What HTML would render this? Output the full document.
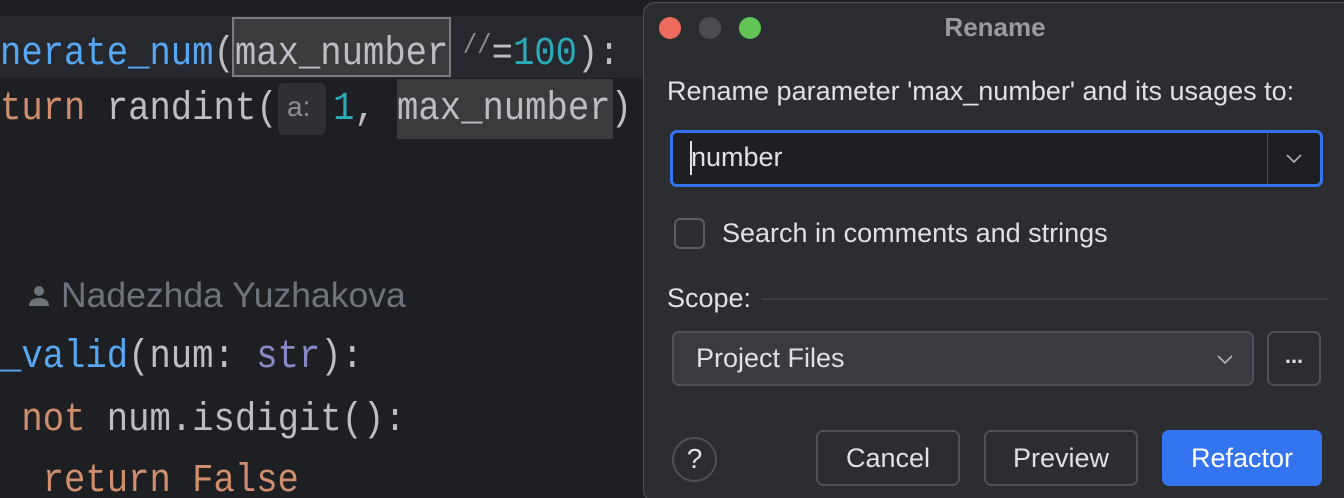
<!DOCTYPE html>
<html><head><meta charset="utf-8"><style>
*{margin:0;padding:0;box-sizing:border-box}
html,body{width:1344px;height:498px;overflow:hidden}
body{background:#1e1f22;position:relative;font-family:"Liberation Sans",sans-serif}
.code{position:absolute;left:0;font-family:"Liberation Mono",monospace;font-size:35.6px;color:#bcbec4;white-space:pre;line-height:62px;height:62px;transform:scaleY(1.12);transform-origin:0 50%}
.fn{color:#56a8f5}.kw{color:#cf8e6d}.num{color:#2aacb8}.bi{color:#8888c6}
.ab{position:absolute}
.dlg{position:absolute;left:643px;top:2px;width:720px;height:500px;background:#2b2d30;border:1px solid #4e5055;border-radius:12px}
.t{position:absolute;font-size:27px;color:#dfe1e5;white-space:nowrap}
.btn{position:absolute;border:2px solid #4e5157;border-radius:7px;color:#dfe1e5;font-size:27px;display:flex;align-items:center;justify-content:center}
</style></head><body>
<div class="ab" style="left:0;top:16px;width:643px;height:62px;background:#26282e"></div>
<div class="ab" style="left:232px;top:17px;width:219px;height:60px;background:#393b3d;border:2px solid #7a7c80"></div>
<div class="ab" style="left:397px;top:79px;width:216px;height:60px;background:#393b3d"></div>
<div class="ab" style="left:278px;top:83px;width:48px;height:52px;background:#2e3034;border-radius:6px"></div>
<div class="code" style="top:16px"><span class="fn">nerate_num</span>(max_number<span style="color:#8c8f94;font-size:24px;vertical-align:10px"> //</span>=<span class="num">100</span>):</div>
<div class="code" style="top:78px"><span class="kw">turn</span> randint(</div>
<div class="t" style="left:287px;top:91px;font-size:28px;color:#8c8f94">a:</div>
<div class="code" style="top:78px;left:333px"><span class="num">1</span>, max_number)</div>
<div class="ab" style="left:27px;top:284px;width:24px;height:24px"><svg width="24" height="24" viewBox="0 0 24 24"><circle cx="12" cy="7" r="5" fill="#6f737a"/><path d="M2 22c0-6 5-8 10-8s10 2 10 8z" fill="#6f737a"/></svg></div>
<div class="t" style="left:61px;top:275px;font-size:35.5px;color:#6f737a">Nadezhda Yuzhakova</div>
<div class="code" style="top:326px"><span class="fn">_valid</span>(num: <span class="bi">str</span>):</div>
<div class="code" style="top:389px"> <span class="kw">not</span> num.isdigit():</div>
<div class="code" style="top:450px">  <span class="kw">return False</span></div>

<div class="dlg"></div>
<div class="ab" style="left:659px;top:17px;width:22px;height:22px;border-radius:50%;background:#ec6a5e"></div>
<div class="ab" style="left:699px;top:17px;width:22px;height:22px;border-radius:50%;background:#4b4c4f"></div>
<div class="ab" style="left:739px;top:17px;width:22px;height:22px;border-radius:50%;background:#61c454"></div>
<div class="t" style="left:935px;top:12px;font-weight:bold;color:#9a9b9e;width:120px;text-align:center;font-size:26px">Rename</div>
<div class="t" style="left:667px;top:76px">Rename parameter 'max_number' and its usages to:</div>
<div class="ab" style="left:670px;top:130px;width:653px;height:57px;border:3px solid #3574f0;border-radius:7px;background:#1e1f22"></div>
<div class="ab" style="left:1267px;top:133px;width:1px;height:51px;background:#4e5157"></div>
<div class="ab" style="left:690px;top:141px;width:2px;height:34px;background:#dfe1e5"></div>
<div class="t" style="left:691px;top:142px">number</div>
<svg class="ab" style="left:1284px;top:151px" width="20" height="14"><path d="M3 4l7 7 7-7" stroke="#b0b2b6" stroke-width="1.6" fill="none"/></svg>
<div class="ab" style="left:674px;top:218px;width:31px;height:31px;border:2px solid #5a5d63;border-radius:6px"></div>
<div class="t" style="left:722px;top:218px">Search in comments and strings</div>
<div class="t" style="left:667px;top:283px">Scope:</div>
<div class="ab" style="left:762px;top:298px;width:566px;height:2px;background:#3c3e43"></div>
<div class="ab" style="left:672px;top:331px;width:582px;height:55px;background:#393b40;border:2px solid #4e5157;border-radius:7px"></div>
<div class="t" style="left:696px;top:343px">Project Files</div>
<svg class="ab" style="left:1215px;top:352px" width="20" height="14"><path d="M3 4l7 7 7-7" stroke="#b0b2b6" stroke-width="1.6" fill="none"/></svg>
<div class="btn" style="left:1267px;top:331px;width:54px;height:55px;font-weight:bold;padding-bottom:6px;font-size:22px">...</div>
<div class="ab" style="left:672px;top:437px;width:45px;height:45px;border:2px solid #4e5157;border-radius:50%;color:#dfe1e5;font-size:28px;text-align:center;line-height:40px">?</div>
<div class="btn" style="left:816px;top:430px;width:144px;height:56px">Cancel</div>
<div class="btn" style="left:984px;top:430px;width:154px;height:56px">Preview</div>
<div class="btn" style="left:1162px;top:430px;width:160px;height:56px;background:#3574f0;border-color:#3574f0;color:#fff">Refactor</div>
</body></html>
